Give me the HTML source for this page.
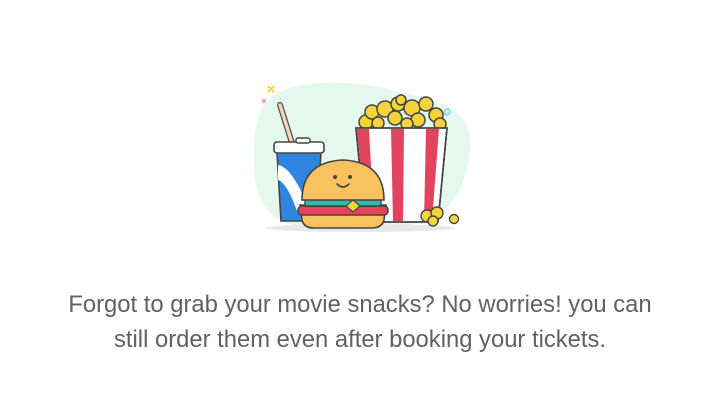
<!DOCTYPE html>
<html><head><meta charset="utf-8"><style>
html,body{margin:0;padding:0;background:#fff;width:720px;height:403px;overflow:hidden}
.t{position:absolute;left:0;width:720px;text-align:center;font-family:"Liberation Sans",sans-serif;font-size:23.8px;color:#616161;line-height:35px}
</style></head><body>
<svg width="720" height="403" style="position:absolute;left:0;top:0" viewBox="0 0 720 403">
<path d="M275 95 C300 78 360 80 400 92 C440 100 475 110 470 150 C466 190 450 222 400 226 L300 226 C262 222 252 190 254 150 C255 120 260 104 275 95Z" fill="#e5f8ee"/>
<ellipse cx="360" cy="228" rx="95" ry="4" fill="#e8e8e8"/>
<path d="M268 86 l6 6 M274 86 l-6 6" stroke="#f2d44a" stroke-width="2"/>
<circle cx="264" cy="101" r="2.2" fill="#f3a1b8"/>
<circle cx="447" cy="112" r="2.8" fill="none" stroke="#7dd6e6" stroke-width="1.6"/>
<path d="M280 105 L292 143" stroke="#555" stroke-width="6" stroke-linecap="round"/>
<path d="M280 105 L292 143" stroke="#f3d9b8" stroke-width="3.4" stroke-linecap="round"/>
<path d="M277 152 L321 152 L317 221 L281 221Z" fill="#2f86e0" stroke="#444" stroke-width="1.6"/>
<path d="M278 165 C292 168 300 190 312 212 L298 214 C292 196 285 182 278 180Z" fill="#fff"/>
<rect x="274" y="142" width="50" height="11" rx="3" fill="#fff" stroke="#444" stroke-width="1.6"/>
<rect x="296" y="138" width="14" height="5" rx="2" fill="#fff" stroke="#444" stroke-width="1.4"/>
<g stroke="#444" stroke-width="1.5" fill="#f5d33b">
<circle cx="366" cy="122" r="7"/><circle cx="372" cy="112" r="7"/><circle cx="385" cy="109" r="8"/><circle cx="398" cy="104" r="7"/><circle cx="412" cy="108" r="8"/><circle cx="426" cy="104" r="7"/><circle cx="436" cy="115" r="7"/><circle cx="440" cy="124" r="6"/><circle cx="395" cy="118" r="7"/><circle cx="418" cy="120" r="7"/><circle cx="378" cy="123" r="6"/><circle cx="407" cy="124" r="6"/><circle cx="401" cy="100" r="5"/>
</g>
<path d="M356 128 L447 128 L438 222 L365 222Z" fill="#fff" stroke="#444" stroke-width="1.6"/>
<g fill="#e0445e"><path d="M357 129 L369 129 L374 221 L366 221Z"/><path d="M391 129 L404 129 L403 221 L393 221Z"/><path d="M426 129 L439 129 L432 221 L424 221Z"/></g>
<path d="M356 128 L447 128 L438 222 L365 222Z" fill="none" stroke="#444" stroke-width="1.6"/>
<g stroke="#444" stroke-width="1.4" fill="#f5d33b"><circle cx="427" cy="216" r="6"/><circle cx="437" cy="213" r="6"/><circle cx="433" cy="221" r="5"/><circle cx="454" cy="219" r="4.5"/></g>
<path d="M300 205 L386 205 L384 220 Q382 228 372 228 L314 228 Q304 228 302 220Z" fill="#f8c35e" stroke="#444" stroke-width="1.6"/>
<rect x="298" y="206" width="90" height="9" rx="4" fill="#e8435e" stroke="#444" stroke-width="1.6"/>
<path d="M305 198 L381 198 L381 206 L305 206Z" fill="#2bbfa6" stroke="#444" stroke-width="1.4"/>
<path d="M353 200 L360 206 L353 212 L346 206Z" fill="#f5d33b" stroke="#444" stroke-width="1.2"/>
<path d="M302 200 Q302 162 343 160 Q384 162 384 200Z" fill="#f8c35e" stroke="#444" stroke-width="1.6"/>
<circle cx="335" cy="177" r="2" fill="#444"/><circle cx="350" cy="177" r="2" fill="#444"/>
<path d="M337 184 Q343 190 349 184" fill="none" stroke="#444" stroke-width="1.6" stroke-linecap="round"/>
</svg>
<div class="t" style="top:287px">Forgot to grab your movie snacks? No worries! you can</div>
<div class="t" style="top:322px">still order them even after booking your tickets.</div>
</body></html>
